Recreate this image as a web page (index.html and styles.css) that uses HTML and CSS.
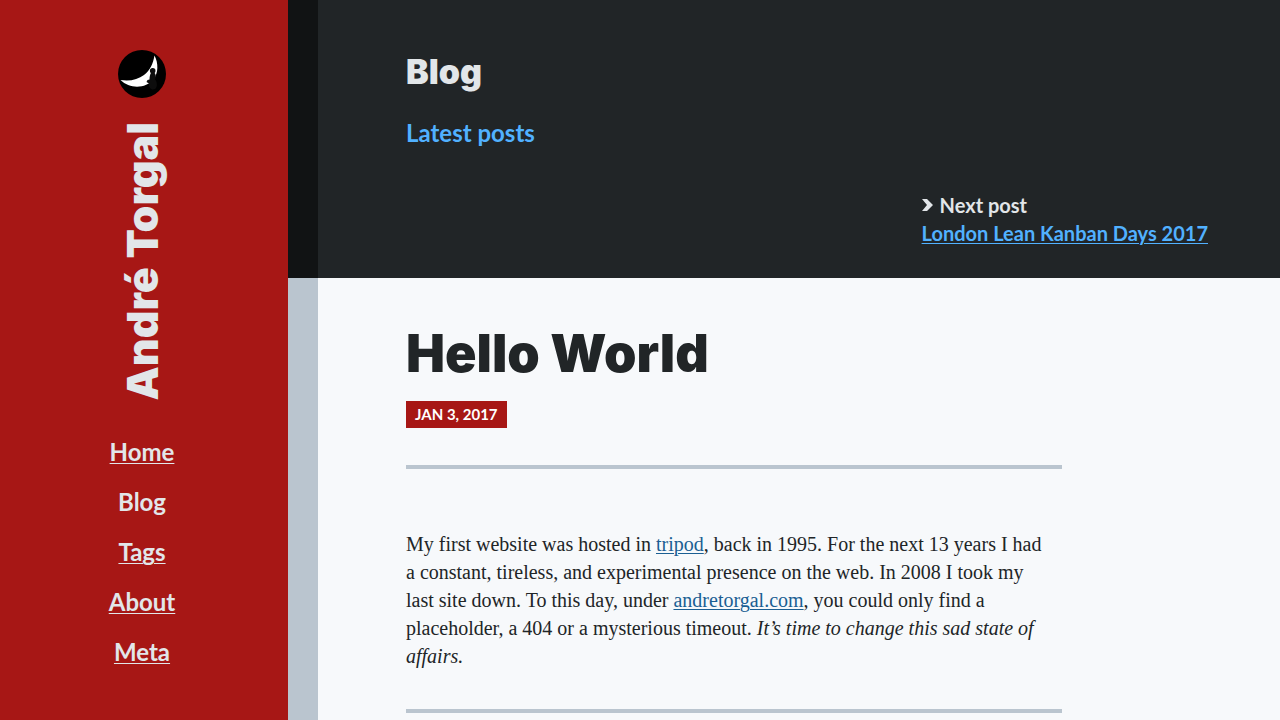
FILE: index.html
```html
<!DOCTYPE html>
<html lang="en">
<head>
<meta charset="utf-8">
<meta name="viewport" content="width=device-width, initial-scale=1">
<title>Hello World</title>
<link rel="stylesheet" href="styles.css">
</head>
<body>
<div class="page">
  <aside class="sidebar">
    <svg class="logo" viewBox="0 0 48 48" aria-hidden="true">
      <circle cx="24" cy="24" r="24" fill="#000"/>
      <path d="M36.500 5.500C40.500 13 40.500 23 35.500 29.500C28 38.500 12 39.500 2.500 30C12 31.500 20 29.500 26 25C32 20.500 35 14 36.500 5.500Z" fill="#fff"/>
      <circle cx="34.700" cy="20.700" r="2.800" fill="#0d0d0d"/>
      <path d="M33.200 22.500H36.200C38.200 24 38.200 27 37 29.500C39.500 32 39.500 37.500 37 39C34 40.500 30.500 38.500 31 33.500L28.500 32L29.500 30L31.500 29.500C31.500 27 32 24.500 33.200 22.500Z" fill="#0d0d0d"/>
    </svg>
    <div class="name">André Torgal</div>
    <nav class="nav">
      <a class="nav-link" href="#home">Home</a>
      <a class="nav-link current" href="#blog" aria-current="page">Blog</a>
      <a class="nav-link" href="#tags">Tags</a>
      <a class="nav-link" href="#about">About</a>
      <a class="nav-link" href="#meta">Meta</a>
    </nav>
  </aside>
  <div class="main">
    <header class="banner">
      <h2 class="section-title">Blog</h2>
      <a class="latest" href="#latest">Latest posts</a>
      <div class="next">
        <div class="next-label">
          <svg class="chevron" viewBox="0 0 12 12" aria-hidden="true"><path d="M0 0H5L11 6L5 12H0L5 6Z" fill="#e2e6e9"/></svg>
          <span>Next post</span>
        </div>
        <a class="next-link" href="#next">London Lean Kanban Days 2017</a>
      </div>
    </header>
    <main class="content">
      <article class="post">
        <h1 class="post-title">Hello World</h1>
        <time class="date" datetime="2017-01-03">JAN 3, 2017</time>
        <hr class="rule">
        <p class="text">My first website was hosted in <a class="link" href="#tripod">tripod</a>, back in 1995. For the next 13 years I had a constant, tireless, and experimental presence on the web. In 2008 I took my last site down. To this day, under <a class="link" href="#site">andretorgal.com</a>, you could only find a placeholder, a 404 or a mysterious timeout. <em>It’s time to change this sad state of affairs.</em></p>
        <hr class="rule">
      </article>
    </main>
  </div>
</div>
</body>
</html>
```

FILE: styles.css
```css
* { box-sizing: border-box; }

body {
  margin: 0;
  background: #f7f9fb;
  color: #212527;
  font-family: Lato, "Open Sans", sans-serif;
}

.page {
  display: grid;
  grid-template-columns: 288px 1fr;
  min-height: 100vh;
}

.sidebar {
  display: flex;
  flex-direction: column;
  align-items: center;
  padding: 50px 4px 40px 0;
  background: #a71715;
  color: #e2e6e9;
}

.logo { width: 48px; height: 48px; }

.name {
  margin: 24px 0 38px;
  font-family: Inter, sans-serif;
  font-size: 43px;
  line-height: 48px;
  font-weight: 900;
  writing-mode: vertical-rl;
  transform: rotate(180deg);
  white-space: nowrap;
}

.nav {
  display: flex;
  flex-direction: column;
  align-items: center;
  gap: 22px;
}

.nav-link {
  color: inherit;
  font-size: 24px;
  line-height: 28px;
  font-weight: 700;
  text-underline-offset: 2px;
  text-decoration-thickness: 1px;
}

.current { text-decoration: none; }

.main {
  display: flex;
  flex-direction: column;
  min-width: 0;
}

.banner {
  display: flex;
  flex-direction: column;
  align-items: flex-start;
  padding: 48px 72px 31px 88px;
  border-left: 30px solid #111314;
  background: #212527;
  color: #e2e6e9;
}

.section-title {
  margin: 0 0 23px;
  font-family: Inter, sans-serif;
  font-size: 34px;
  line-height: 48px;
  font-weight: 900;
}

.latest {
  color: #51b1ff;
  font-size: 24px;
  line-height: 28px;
  font-weight: 700;
  text-decoration: none;
}

.next {
  align-self: flex-end;
  margin-top: 44px;
  font-size: 20px;
  line-height: 28px;
  font-weight: 700;
}

.next-label {
  display: flex;
  align-items: center;
  gap: 6px;
}

.chevron { width: 12px; height: 12px; }

.next-link {
  color: #51b1ff;
  text-underline-offset: 2px;
  text-decoration-thickness: 1px;
}

.content {
  flex: 1;
  padding: 48px 72px 0 88px;
  border-left: 30px solid #bac5cf;
}

.post { max-width: 656px; }

.post-title {
  margin: 0 0 19px;
  font-family: Inter, sans-serif;
  font-size: 52px;
  line-height: 56px;
  font-weight: 900;
}

.date {
  display: block;
  width: fit-content;
  padding: 0 9px;
  background: #a71715;
  color: #fff;
  font-size: 15px;
  line-height: 27px;
  font-weight: 700;
}

.rule {
  height: 4px;
  margin: 37px 0 0;
  border: 0;
  background: #bac5cf;
}

.text {
  margin: 61px 0 39px;
  padding-right: 16px;
  font-family: "Liberation Serif", serif;
  font-size: 20px;
  line-height: 28px;
}

.link {
  color: #1b5f93;
  text-underline-offset: 2px;
  text-decoration-thickness: 1px;
}
```
